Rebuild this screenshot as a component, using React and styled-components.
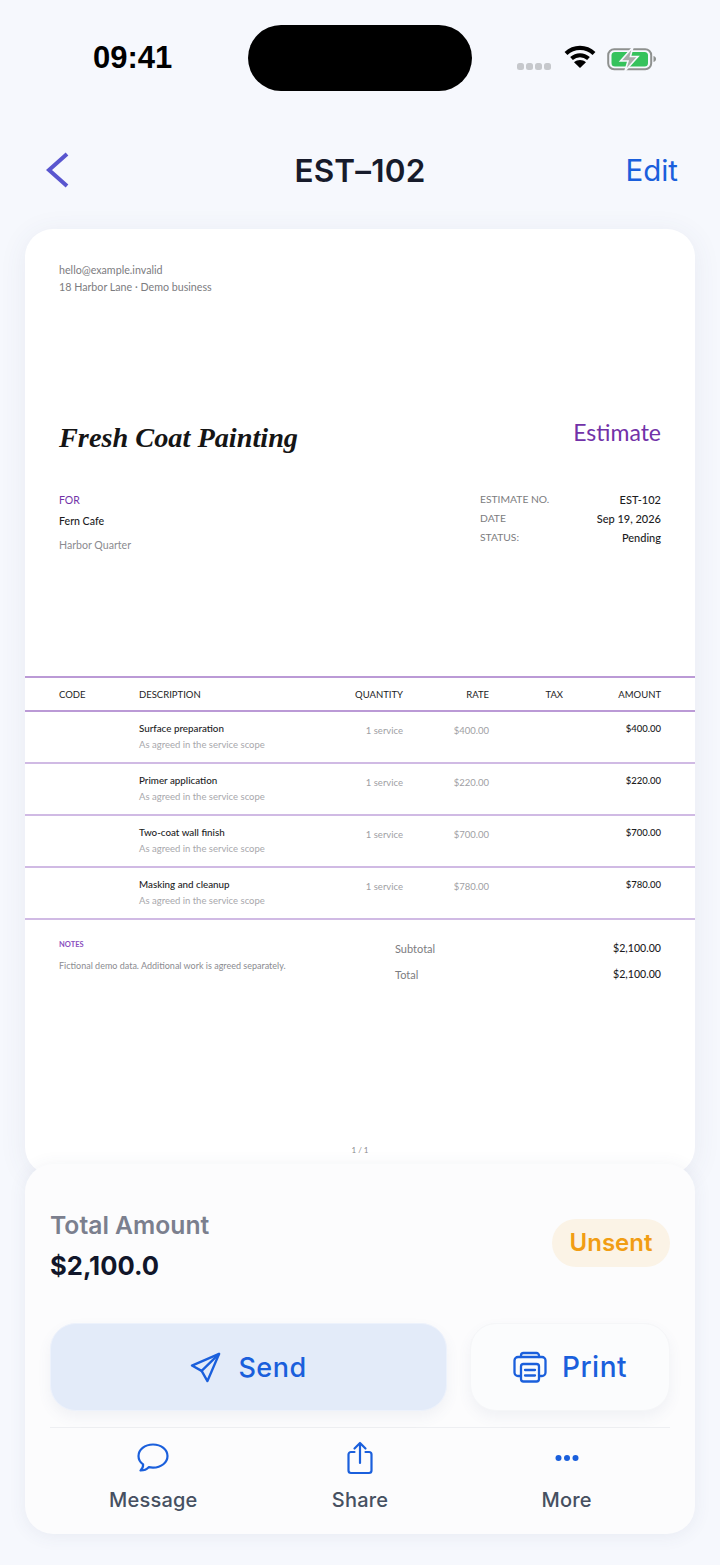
import React from 'react';
import styled, { createGlobalStyle } from 'styled-components';

const items = [
  { name: 'Surface preparation', rate: '$400.00' },
  { name: 'Primer application', rate: '$220.00' },
  { name: 'Two-coat wall finish', rate: '$700.00' },
  { name: 'Masking and cleanup', rate: '$780.00' }
];

const GlobalStyle = createGlobalStyle`
  html, body {
    margin: 0;
    padding: 0;
    background: #f6f8fd;
  }
  * {
    box-sizing: border-box;
  }
`;

const Page = styled.div`
  width: 720px;
  height: 1565px;
  overflow: hidden;
  background: #f6f8fd;
  font-family: Inter, "Liberation Sans", sans-serif;
`;

const StatusBar = styled.div`
  height: 116px;
  padding-top: 25px;
  display: grid;
  grid-template-columns: 248px 224px 248px;
  align-items: start;
`;

const Clock = styled.div`
  height: 66px;
  line-height: 66px;
  padding-left: 93px;
  font-family: "Liberation Sans", sans-serif;
  font-size: 31px;
  font-weight: 700;
  color: #000;
`;

const Island = styled.div`
  height: 66px;
  background: #000;
  border-radius: 33px;
`;

const StatusIcons = styled.div`
  height: 66px;
  padding: 20px 0 0 45px;
  display: flex;
  align-items: flex-start;
`;

const SignalDots = styled.div`
  display: flex;
  gap: 2px;
  margin: 18px 13px 0 0;
`;

const Dot = styled.span`
  width: 7px;
  height: 7px;
  border-radius: 2.5px;
  background: #c6c8cc;
`;

const NavBar = styled.div`
  height: 113px;
  padding: 0 42px 5px 46px;
  display: grid;
  grid-template-columns: 1fr auto 1fr;
  align-items: center;
`;

const NavTitle = styled.div`
  font-size: 31.5px;
  font-weight: 600;
  color: #171b2b;
  letter-spacing: 0.2px;
  transform: translateX(-2px);
`;

const EditLink = styled.div`
  justify-self: end;
  font-size: 29.5px;
  font-weight: 400;
  color: #1a5fdc;
`;

const Sheet = styled.div`
  margin: 0 25px;
  height: 946px;
  background: #fff;
  border-radius: 28px;
  box-shadow: 0 4px 28px rgba(70, 80, 120, 0.08);
  font-family: Lato, "Open Sans", sans-serif;
  display: flex;
  flex-direction: column;
`;

const Letterhead = styled.div`
  padding: 32px 34px 0;
  height: 187px;
  font-size: 10.7px;
  line-height: 17px;
  color: #7c7c80;
`;

const BrandRow = styled.div`
  padding: 0 34px;
  height: 70px;
  display: flex;
  justify-content: space-between;
  align-items: flex-start;
`;

const Brand = styled.div`
  font-family: "Liberation Serif", serif;
  font-style: italic;
  font-weight: 700;
  font-size: 28.3px;
  line-height: 44px;
  color: #151515;
`;

const DocType = styled.div`
  font-size: 23px;
  line-height: 32px;
  color: #7232a8;
`;

const MetaRow = styled.div`
  padding: 0 34px;
  height: 190px;
  display: flex;
  justify-content: space-between;
`;

const Client = styled.div`
  padding-top: 7px;
`;

const ForLabel = styled.div`
  font-size: 10.5px;
  line-height: 14px;
  color: #7232a8;
`;

const ClientName = styled.div`
  margin-top: 7px;
  font-size: 10.6px;
  line-height: 14px;
  font-weight: 500;
  color: #1c1c1e;
`;

const ClientPlace = styled.div`
  margin-top: 10px;
  font-size: 10.6px;
  line-height: 14px;
  color: #8b8b90;
`;

const MetaGrid = styled.div`
  width: 181px;
  padding-top: 4px;
  display: grid;
  grid-template-columns: auto auto;
  justify-content: space-between;
  align-content: start;
  grid-auto-rows: 19px;
  line-height: 19px;
`;

const MetaKey = styled.div`
  font-size: 10.3px;
  color: #7c7c80;
`;

const MetaValue = styled.div`
  font-size: 11px;
  text-align: right;
  font-weight: 500;
  color: #1c1c1e;
`;

const Row = styled.div`
  padding: 0 34px;
  display: grid;
  grid-template-columns: 80px 184px 80px 86px 74px 98px;
  height: ${props => props.$height}px;
  border-bottom: 2px solid ${props => props.$thick ? '#bb9ad6' : '#d0bae4'};
`;

const HeadRow = styled(Row)`
  border-top: 2px solid #bb9ad6;
  align-items: center;
  font-size: 9.5px;
  color: #1c1c1e;
`;

const HeadCell = styled.div`
  text-align: ${props => props.$right ? 'right' : 'left'};
  white-space: nowrap;
`;

const ItemCell = styled.div`
  padding-top: 9px;
`;

const ItemName = styled.div`
  font-size: 9.8px;
  line-height: 14px;
  font-weight: 500;
  color: #1c1c1e;
`;

const ItemNote = styled.div`
  margin-top: 3px;
  font-size: 9.5px;
  line-height: 14px;
  color: #a8a8ac;
`;

const NumCell = styled.div`
  padding-top: ${props => props.$strong ? '10px' : '12px'};
  font-size: 9.5px;
  line-height: 14px;
  text-align: right;
  white-space: nowrap;
  font-weight: ${props => props.$strong ? 500 : 400};
  color: ${props => props.$strong ? '#1c1c1e' : '#a0a0a4'};
`;

const Footer = styled.div`
  padding: 18px 34px 0;
  display: flex;
  justify-content: space-between;
  flex: 1;
`;

const Notes = styled.div``;

const NotesLabel = styled.div`
  font-size: 7.5px;
  line-height: 14px;
  font-weight: 700;
  color: #8a4fc0;
`;

const NotesText = styled.div`
  margin-top: 7px;
  font-size: 9px;
  line-height: 14px;
  color: #8b8b90;
`;

const Totals = styled.div`
  width: 266px;
  display: grid;
  grid-template-columns: auto auto;
  justify-content: space-between;
  grid-auto-rows: 26px;
  align-content: start;
  line-height: 20px;
`;

const TotalKey = styled.div`
  font-size: 11px;
  color: #7c7c80;
  padding-top: 1px;
`;

const TotalValue = styled.div`
  font-size: 10.6px;
  color: #1c1c1e;
  font-weight: 500;
`;

const PageNumber = styled.div`
  height: 30px;
  font-size: 8px;
  text-align: center;
  color: #8b8b90;
`;

const ActionPanel = styled.div`
  position: relative;
  margin: -11px 25px 0;
  height: 370px;
  padding: 44px 25px 0 25px;
  background: #fcfcfd;
  border-radius: 28px;
  box-shadow: 0 2px 18px rgba(70, 80, 120, 0.08);
`;

const SummaryRow = styled.div`
  height: 115px;
  display: flex;
  justify-content: space-between;
  align-items: flex-start;
`;

const TotalLabel = styled.div`
  font-size: 24.7px;
  line-height: 34px;
  font-weight: 600;
  color: #7b7f8e;
`;

const TotalAmount = styled.div`
  margin-top: 7px;
  font-size: 25.6px;
  line-height: 34px;
  font-weight: 700;
  color: #11162a;
`;

const StatusBadge = styled.div`
  margin-top: 11px;
  width: 118px;
  height: 48px;
  border-radius: 24px;
  background: #fbf3e6;
  color: #f19d14;
  font-size: 24px;
  font-weight: 600;
  line-height: 48px;
  text-align: center;
`;

const Buttons = styled.div`
  display: grid;
  grid-template-columns: 397px 200px;
  justify-content: space-between;
  padding-bottom: 16px;
  border-bottom: 1px solid #eeeff2;
`;

const ActionButton = styled.div`
  height: 88px;
  border-radius: 26px;
  display: flex;
  align-items: center;
  justify-content: center;
  gap: ${props => props.$primary ? '17px' : '15px'};
  font-size: ${props => props.$primary ? '27px' : '28px'};
  font-weight: 500;
  letter-spacing: 0.5px;
  color: #1a5fdc;
  background: ${props => props.$primary ? '#e3ebf9' : '#fbfcfd'};
  border: 1px solid ${props => props.$primary ? '#edf2fc' : '#f5f6f8'};
  box-shadow: 0 6px 14px rgba(90, 100, 140, 0.07);
`;

const QuickActions = styled.div`
  display: grid;
  grid-template-columns: repeat(3, 1fr);
  padding-top: 11px;
`;

const QuickAction = styled.div`
  display: flex;
  flex-direction: column;
  align-items: center;
  font-size: 20px;
  font-weight: 500;
  color: #465061;
`;

const QuickIcon = styled.div`
  height: 38px;
  display: flex;
  align-items: center;
  justify-content: center;
`;

const QuickLabel = styled.div`
  margin-top: 6px;
  line-height: 34px;
  letter-spacing: 0.2px;
`;

const Wifi = () => (
  <svg width="32" height="24" viewBox="0 0 32 24">
    <path d="M2 8.5C10 1 22 1 30 8.5" fill="none" stroke="#000" strokeWidth="4.2" />
    <path d="M7.5 13.5C12.5 9 19.5 9 24.5 13.5" fill="none" stroke="#000" strokeWidth="4" />
    <path d="M16 23l-6-5.8c3.5-2.8 8.5-2.8 12 0z" fill="#000" />
  </svg>
);

const Battery = () => (
  <svg width="50" height="26" viewBox="0 0 50 26" style={{ marginLeft: 11, marginTop: 1 }}>
    <rect x="1.2" y="3.2" width="43" height="20" rx="6" fill="none" stroke="#8e918f" strokeWidth="2" />
    <rect x="4.5" y="6" width="36.5" height="14.5" rx="3.5" fill="#35c25c" />
    <path d="M46.5 10v6c1.8-.5 2.5-1.6 2.5-3s-.7-2.5-2.5-3z" fill="#8e918f" />
    <path d="M26 1L13.5 15H21l-3 10 13-14.5h-7.6z" fill="#a9acaa" stroke="#f6f8fd" strokeWidth="1.6" />
  </svg>
);

const BackIcon = () => (
  <svg width="24" height="36" viewBox="0 0 24 36">
    <path d="M21 2L3 18l18 16" fill="none" stroke="#5956cf" strokeWidth="4" />
  </svg>
);

const SendIcon = () => (
  <svg width="31" height="31" viewBox="0 0 32 32" fill="none" stroke="#1a5fdc" strokeWidth="2.4" strokeLinejoin="round" strokeLinecap="round">
    <path d="M30 2L2 14l10 5.5 6 10.5z" />
    <path d="M30 2L12 19.5" />
  </svg>
);

const PrintIcon = () => (
  <svg width="34" height="32" viewBox="0 0 34 32" fill="none" stroke="#1a5fdc" strokeWidth="2.3" strokeLinejoin="round" strokeLinecap="round">
    <path d="M8 6V4.5A2.5 2.5 0 0 1 10.5 2h13A2.5 2.5 0 0 1 26 4.5V6" />
    <path d="M7 25H5a3.5 3.5 0 0 1-3.5-3.5v-12A3.5 3.5 0 0 1 5 6h24a3.5 3.5 0 0 1 3.5 3.5v12A3.5 3.5 0 0 1 29 25h-2" />
    <rect x="8" y="13" width="18" height="17.5" rx="2.5" />
    <path d="M12 19h10M12 24.5h10" />
  </svg>
);

const MessageIcon = () => (
  <svg width="32" height="30" viewBox="0 0 32 30" fill="none" stroke="#1a5fdc" strokeWidth="2.2" strokeLinejoin="round">
    <path d="M16 1.5C7.7 1.5 1.5 6.6 1.5 13c0 3.4 1.7 6.3 4.6 8.4.2 2.2-.8 4.4-2.6 6.1 3.4-.1 6.3-1.2 8.2-3.3 1.4.3 2.8.4 4.3.4 8.3 0 14.5-5.1 14.5-11.6S24.3 1.5 16 1.5z" />
  </svg>
);

const ShareIcon = () => (
  <svg width="26" height="34" viewBox="0 0 26 34" fill="none" stroke="#1a5fdc" strokeWidth="2.2" strokeLinecap="round" strokeLinejoin="round">
    <path d="M7.5 11H4a2.5 2.5 0 0 0-2.5 2.5v16A2.5 2.5 0 0 0 4 32h18a2.5 2.5 0 0 0 2.5-2.5v-16A2.5 2.5 0 0 0 22 11h-3.5" />
    <path d="M13 22V2M7.5 7.5L13 2l5.5 5.5" />
  </svg>
);

const MoreIcon = () => (
  <svg width="24" height="8" viewBox="0 0 24 8" fill="#1a5fdc">
    <circle cx="3.5" cy="4" r="3" />
    <circle cx="12" cy="4" r="3" />
    <circle cx="20.5" cy="4" r="3" />
  </svg>
);

const App = () => {
  return (
    <Page>
      <GlobalStyle />
      <StatusBar>
        <Clock>09:41</Clock>
        <Island />
        <StatusIcons>
          <SignalDots>
            <Dot />
            <Dot />
            <Dot />
            <Dot />
          </SignalDots>
          <Wifi />
          <Battery />
        </StatusIcons>
      </StatusBar>

      <NavBar>
        <BackIcon />
        <NavTitle>EST–102</NavTitle>
        <EditLink>Edit</EditLink>
      </NavBar>

      <Sheet>
        <Letterhead>
          <div>hello@example.invalid</div>
          <div>18 Harbor Lane · Demo business</div>
        </Letterhead>
        <BrandRow>
          <Brand>Fresh Coat Painting</Brand>
          <DocType>Estimate</DocType>
        </BrandRow>
        <MetaRow>
          <Client>
            <ForLabel>FOR</ForLabel>
            <ClientName>Fern Cafe</ClientName>
            <ClientPlace>Harbor Quarter</ClientPlace>
          </Client>
          <MetaGrid>
            <MetaKey>ESTIMATE NO.</MetaKey>
            <MetaValue>EST-102</MetaValue>
            <MetaKey>DATE</MetaKey>
            <MetaValue>Sep 19, 2026</MetaValue>
            <MetaKey>STATUS:</MetaKey>
            <MetaValue>Pending</MetaValue>
          </MetaGrid>
        </MetaRow>

        <HeadRow $height={36} $thick>
          <HeadCell>CODE</HeadCell>
          <HeadCell>DESCRIPTION</HeadCell>
          <HeadCell $right>QUANTITY</HeadCell>
          <HeadCell $right>RATE</HeadCell>
          <HeadCell $right>TAX</HeadCell>
          <HeadCell $right>AMOUNT</HeadCell>
        </HeadRow>
        {items.map((item) => (
          <Row key={item.name} $height={52}>
            <div />
            <ItemCell>
              <ItemName>{item.name}</ItemName>
              <ItemNote>As agreed in the service scope</ItemNote>
            </ItemCell>
            <NumCell>1 service</NumCell>
            <NumCell>{item.rate}</NumCell>
            <NumCell />
            <NumCell $strong>{item.rate}</NumCell>
          </Row>
        ))}

        <Footer>
          <Notes>
            <NotesLabel>NOTES</NotesLabel>
            <NotesText>Fictional demo data. Additional work is agreed separately.</NotesText>
          </Notes>
          <Totals>
            <TotalKey>Subtotal</TotalKey>
            <TotalValue>$2,100.00</TotalValue>
            <TotalKey>Total</TotalKey>
            <TotalValue>$2,100.00</TotalValue>
          </Totals>
        </Footer>
        <PageNumber>1 / 1</PageNumber>
      </Sheet>

      <ActionPanel>
        <SummaryRow>
          <div>
            <TotalLabel>Total Amount</TotalLabel>
            <TotalAmount>$2,100.0</TotalAmount>
          </div>
          <StatusBadge>Unsent</StatusBadge>
        </SummaryRow>
        <Buttons>
          <ActionButton $primary>
            <SendIcon />
            Send
          </ActionButton>
          <ActionButton>
            <PrintIcon />
            Print
          </ActionButton>
        </Buttons>
        <QuickActions>
          <QuickAction>
            <QuickIcon><MessageIcon /></QuickIcon>
            <QuickLabel>Message</QuickLabel>
          </QuickAction>
          <QuickAction>
            <QuickIcon><ShareIcon /></QuickIcon>
            <QuickLabel>Share</QuickLabel>
          </QuickAction>
          <QuickAction>
            <QuickIcon><MoreIcon /></QuickIcon>
            <QuickLabel>More</QuickLabel>
          </QuickAction>
        </QuickActions>
      </ActionPanel>
    </Page>
  );
};

export default App;
